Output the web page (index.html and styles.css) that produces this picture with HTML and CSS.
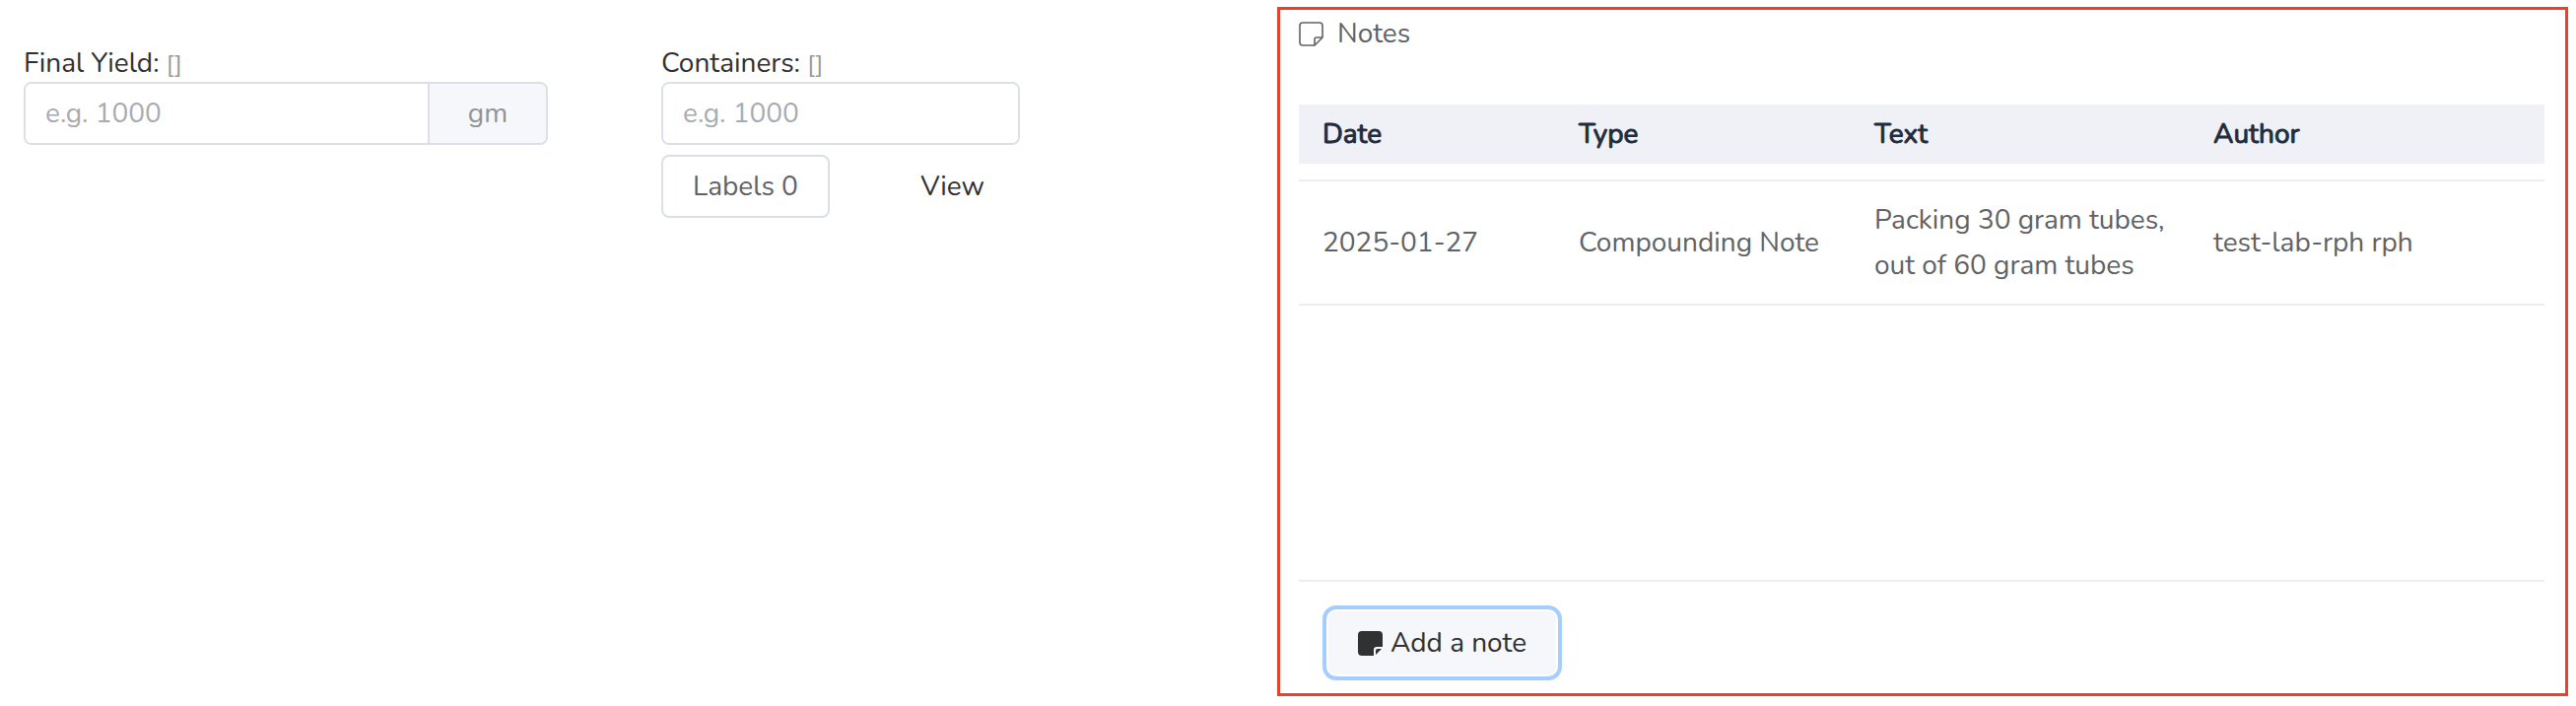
FILE: index.html
```html
<!DOCTYPE html>
<html lang="en">
<head>
<meta charset="utf-8">
<title>Compounding notes</title>
<link rel="stylesheet" href="styles.css">
</head>
<body>
<main class="layout">
  <section class="field field-yield">
    <label class="field-label" for="yield">Final Yield: <span class="hint">[]</span></label>
    <div class="input-group">
      <input class="input" id="yield" type="text" placeholder="e.g. 1000">
      <span class="unit">gm</span>
    </div>
  </section>
  <section class="field field-containers">
    <label class="field-label" for="containers">Containers: <span class="hint">[]</span></label>
    <div class="input-group">
      <input class="input" id="containers" type="text" placeholder="e.g. 1000">
    </div>
    <div class="actions">
      <button class="button" type="button">Labels 0</button>
      <button class="button button-text" type="button">View</button>
    </div>
  </section>
  <section class="panel">
    <h2 class="panel-title">
      <svg class="icon" viewBox="0 0 25 25" fill="none" stroke="currentColor" stroke-width="1.6" stroke-linejoin="round" aria-hidden="true">
        <path d="M4 1H21Q24 1 24 4V16L16 24H4Q1 24 1 21V4Q1 1 4 1Z"/>
        <path d="M16 24V18Q16 16 18 16H24"/>
      </svg>
      Notes
    </h2>
    <div class="table-area">
      <table class="notes">
        <colgroup><col class="col-date"><col class="col-type"><col class="col-text"><col class="col-author"></colgroup>
        <thead>
          <tr><th scope="col">Date</th><th scope="col">Type</th><th scope="col">Text</th><th scope="col">Author</th></tr>
        </thead>
        <tbody>
          <tr><td>2025-01-27</td><td>Compounding Note</td><td>Packing 30 gram tubes, out of 60 gram tubes</td><td>test-lab-rph rph</td></tr>
        </tbody>
      </table>
    </div>
    <div class="panel-footer">
      <button class="button button-add" type="button">
        <svg class="icon" viewBox="0 0 25 25" fill="currentColor" aria-hidden="true">
          <path d="M4 0H21Q25 0 25 4V16H19Q16 16 16 19V25H4Q0 25 0 21V4Q0 0 4 0Z"/>
          <path d="M24 18L18 24V20Q18 18 20 18Z"/>
        </svg>
        Add a note
      </button>
    </div>
  </section>
</main>
</body>
</html>
```
FILE: styles.css
```css
* {
  box-sizing: border-box;
}

body {
  margin: 0;
  background: #fff;
  color: #606266;
  font-family: Nunito, Lato, "Open Sans", sans-serif;
  font-size: 28px;
  line-height: 46px;
}

.layout {
  display: grid;
  grid-template-columns: minmax(0, 647fr) minmax(0, 625fr) minmax(0, 1310fr);
  align-items: start;
  padding: 7px 8px 8px 24px;
}

.field {
  padding-top: 34px;
}

.field-yield {
  padding-right: 115px;
}

.field-containers {
  padding-right: 261px;
}

.field-label {
  display: block;
  height: 42px;
  color: #303133;
}

.hint {
  color: #999;
  font-size: 24px;
}

.input-group {
  display: flex;
  height: 64px;
  border: 2px solid #dcdfe6;
  border-radius: 8px;
  overflow: hidden;
}

.input {
  flex: 1;
  min-width: 0;
  padding: 0 20px;
  border: 0;
  background: #fff;
  color: #606266;
  font: inherit;
}

.input::placeholder {
  color: #a8abb2;
  opacity: 1;
}

.unit {
  flex: 0 0 120px;
  border-left: 2px solid #dcdfe6;
  background: #f5f7fa;
  color: #909399;
  line-height: 60px;
  text-align: center;
}

.actions {
  display: flex;
  justify-content: space-between;
  padding-top: 10px;
}

.button {
  height: 64px;
  padding: 0 30px;
  border: 2px solid #dcdfe6;
  border-radius: 8px;
  background: #fff;
  color: #606266;
  font: inherit;
}

.button-text {
  padding: 0 34px;
  border-color: transparent;
  color: #303133;
}

.panel {
  padding: 1px 21px 13px 19px;
  border: 3px solid #ec4128;
}

.panel-title {
  display: flex;
  align-items: center;
  gap: 14px;
  margin: 0;
  padding-bottom: 49px;
  font-size: 28px;
  font-weight: 400;
}

.icon {
  width: 25px;
  height: 25px;
}

.table-area {
  min-height: 484px;
  border-bottom: 2px solid #ebeef5;
}

.notes {
  width: 100%;
  border-spacing: 0;
  table-layout: fixed;
}

.col-date {
  width: 260px;
}

.col-type {
  width: 300px;
}

.col-text {
  width: 344px;
}

.notes th {
  padding: 7px 24px;
  background: #eff1f6;
  color: #1f2d3d;
  font-weight: 400;
  text-align: left;
  -webkit-text-stroke: 1px currentColor;
}

.notes tbody::before {
  display: block;
  height: 16px;
  content: "";
}

.notes td {
  padding: 16px 24px;
  border: solid #ebeef5;
  border-width: 2px 0;
}

.panel-footer {
  padding: 30px 30px 6px;
}

.button-add {
  display: flex;
  align-items: center;
  gap: 8px;
  padding: 0 28px;
  border-color: #f5f7fa;
  background: #f5f7fa;
  color: #303133;
  outline: 4px solid #a6cdff;
  outline-offset: 2px;
}
```
